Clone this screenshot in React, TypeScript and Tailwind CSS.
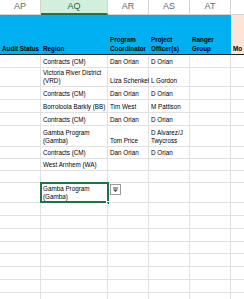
const cols = ['AP', 'AQ', 'AR', 'AS', 'AT', ''];
const widths = ['w-[41px]', 'w-[67px]', 'w-[41px]', 'w-[41px]', 'w-[41px]', 'w-[40px]'];

type Row = { h: string; region?: string; coord?: string; officer?: string; selected?: boolean; wrap?: boolean };

const rows: Row[] = [
  { h: 'h-[13px]', region: 'Contracts (CM)', coord: 'Dan Orian', officer: 'D Orian' },
  { h: 'h-[19px]', region: 'Victoria River District (VRD)', coord: 'Liza Schenkel', officer: 'L Gordon', wrap: true },
  { h: 'h-[13px]', region: 'Contracts (CM)', coord: 'Dan Orian', officer: 'D Orian' },
  { h: 'h-[13px]', region: 'Borroloola Barkly (BB)', coord: 'Tim West', officer: 'M Pattison' },
  { h: 'h-[13px]', region: 'Contracts (CM)', coord: 'Dan Orian', officer: 'D Orian' },
  { h: 'h-[21px]', region: 'Gamba Program (Gamba)', coord: 'Tom Price', officer: 'D Alvarez/J Twycross', wrap: true },
  { h: 'h-[12px]', region: 'Contracts (CM)', coord: 'Dan Orian', officer: 'D Orian' },
  { h: 'h-[12px]', region: 'West Arnhem (WA)' },
  { h: 'h-[12px]' },
  { h: 'h-[20px]', region: 'Gamba Program (Gamba)', selected: true, wrap: true },
  { h: 'h-[13px]' },
  { h: 'h-[13px]' },
  { h: 'h-[13px]' },
  { h: 'h-[12px]' },
  { h: 'h-[13px]' },
  { h: 'h-[13px]' },
  { h: 'h-[13px]' },
  { h: 'h-[13px]' },
];

function Cell({ w, children, wrap }: { w: string; children?: React.ReactNode; wrap?: boolean }) {
  return (
    <div
      className={`${w} shrink-0 h-full border-r border-b border-[#e1e1e1] flex items-end px-[2px] pb-[1px] leading-[8px] ${
        wrap ? 'whitespace-normal' : 'whitespace-nowrap'
      }`}
    >
      <span>{children}</span>
    </div>
  );
}

export default function App() {
  return (
    <div
      className="w-[244px] h-[299px] overflow-hidden bg-white text-[6.3px] text-black"
      style={{ fontFamily: '"Liberation Sans", Arial, sans-serif' }}
    >
      {/* column letters */}
      <div className="flex h-[15px] bg-white">
        {cols.map((c, i) => (
          <div
            key={i}
            className={`${widths[i]} shrink-0 flex items-center justify-center text-[9px] border-r border-[#d4d4d4] ${
              c === 'AQ'
                ? 'bg-[#d2efdd] text-[#1e6b40] border-b-2 border-b-[#217346]'
                : 'text-[#666666] border-b border-b-[#d4d4d4]'
            }`}
          >
            {c}
          </div>
        ))}
      </div>

      {/* header row */}
      <div className="flex h-[40px] border-b border-[#222]">
        {['Audit Status', 'Region', 'Program Coordinator', 'Project Officer(s)', 'Ranger Group'].map((t, i) => (
          <div
            key={t}
            className={`${widths[i]} shrink-0 bg-[#00b0f0] flex items-end px-[2px] pb-[1px] font-bold leading-[9px] ${
              i === 0 ? 'whitespace-nowrap' : ''
            }`}
          >
            <span>{t}</span>
          </div>
        ))}
        <div className="w-[40px] shrink-0 bg-[#fce4d6] flex items-end px-[2px] pb-[1px] font-bold leading-[9px]">
          <span>Mo</span>
        </div>
      </div>

      {/* body rows */}
      {rows.map((r, idx) => (
        <div key={idx} className={`flex ${r.h}`}>
          <Cell w={widths[0]} />
          <div className="relative w-[67px] shrink-0 h-full">
            <Cell w="w-[67px]" wrap={r.wrap}>
              {r.region}
            </Cell>
            {r.selected && (
              <>
                <div className="absolute -top-[1px] -left-[1px] w-[69px] h-[21px] border-2 border-[#217346]" />
                <div className="absolute -bottom-[2px] -right-[2px] w-[4px] h-[4px] bg-[#217346] border border-white" />
                {/* validation dropdown */}
                <div className="absolute top-[1px] left-[69px] w-[11px] h-[11px] bg-white border border-[#9a9a9a] flex items-center justify-center">
                  <svg width="7" height="6" viewBox="0 0 7 6">
                    <rect x="1" y="0.5" width="5" height="1" fill="#444" />
                    <path d="M1 2.5 H6 L3.5 5 Z" fill="#444" />
                  </svg>
                </div>
              </>
            )}
          </div>
          <Cell w={widths[2]}>{r.coord}</Cell>
          <Cell w={widths[3]} wrap={r.officer === 'D Alvarez/J Twycross'}>
            {r.officer}
          </Cell>
          <Cell w={widths[4]} />
          <Cell w={widths[5]} />
        </div>
      ))}
    </div>
  );
}
